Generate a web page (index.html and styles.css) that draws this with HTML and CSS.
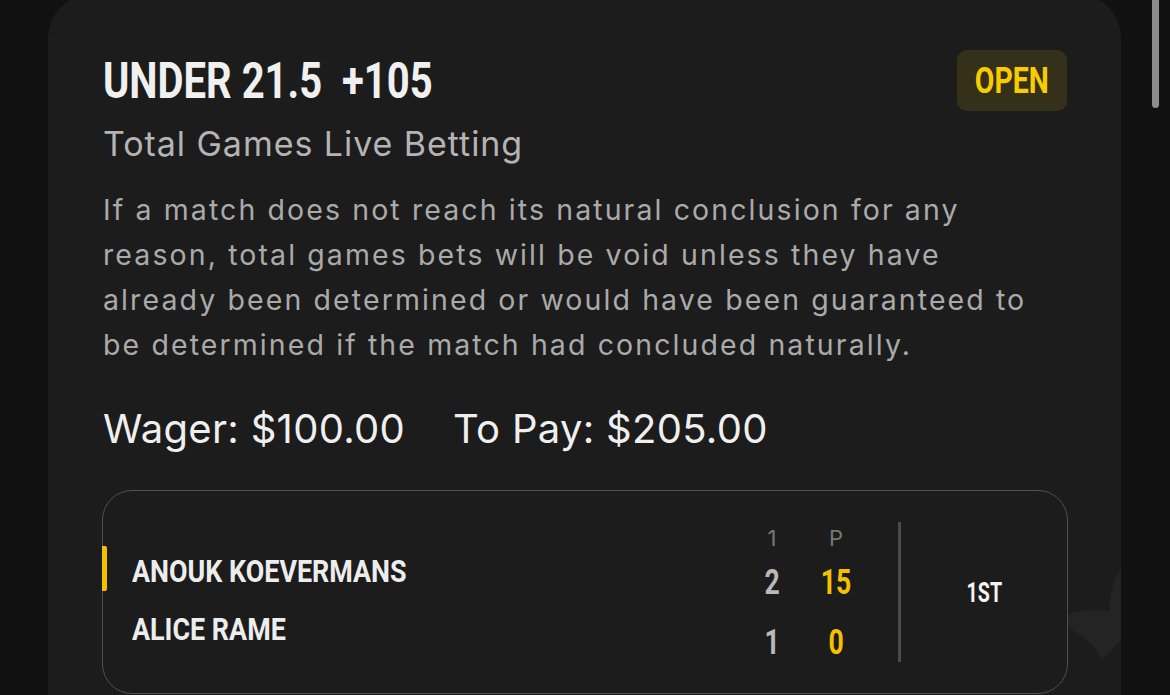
FILE: index.html
```html
<!DOCTYPE html>
<html lang="en">
<head>
  <meta charset="UTF-8" />
  <title>Bet Slip</title>
  <link rel="stylesheet" href="styles.css">
</head>
<body>

  <div class="scrollbar"></div>

  <div class="card">
    <svg class="watermark" width="70" height="150" viewBox="1058 554 70 150">
      <path d="M1121 568 C1113 580 1109 596 1110 611 C1096 609 1082 610 1068 614 L1068 628 C1082 634 1095 645 1102 660 L1121 640 Z" fill="#242424" />
    </svg>

    <div class="card-head">
      <h1 class="bet-title"><span class="narrow">UNDER 21.5&nbsp;&nbsp;+105</span></h1>
      <span class="status"><span class="narrow">OPEN</span></span>
    </div>

    <div class="market">Total Games Live Betting</div>

    <p class="rules">If a match does not reach its natural conclusion for any reason, total games bets will be void unless they have already been determined or would have been guaranteed to be determined if the match had concluded naturally.</p>

    <div class="amounts">
      <span>Wager: $100.00</span>
      <span>To Pay: $205.00</span>
    </div>

    <div class="scoreboard">
      <div class="players">
        <div class="player serving"><span class="narrow">ANOUK KOEVERMANS</span></div>
        <div class="player"><span class="narrow">ALICE RAME</span></div>
      </div>

      <div class="scores">
        <div class="score-col">
          <span class="col-head">1</span>
          <span class="set"><span class="narrow">2</span></span>
          <span class="set"><span class="narrow">1</span></span>
        </div>
        <div class="score-col">
          <span class="col-head">P</span>
          <span class="point"><span class="narrow">15</span></span>
          <span class="point"><span class="narrow">0</span></span>
        </div>
      </div>

      <div class="divider"></div>

      <div class="period"><span class="narrow">1ST</span></div>
    </div>
  </div>

</body>
</html>
```

FILE: styles.css
```css
body {
  margin: 0;
  background: #111111;
  font-family: Inter, "Noto Sans", sans-serif;
  overflow: hidden;
  height: 695px;
}

.scrollbar {
  position: absolute;
  top: -10px;
  left: 1152px;
  width: 7px;
  height: 118px;
  border-radius: 4px;
  background: #8d8d8d;
}

.card {
  position: relative;
  overflow: hidden;
  margin: -6px 0 0 48px;
  width: 1073px;
  height: 760px;
  box-sizing: border-box;
  padding: 58px 54px 0 55px;
  background: #1c1c1c;
  border-radius: 44px;
}

.watermark {
  position: absolute;
  left: 1010px;
  top: 560px;
}

/* condensed look: no narrow family installed, so squeeze Roboto */
.narrow {
  display: inline-block;
  transform-origin: left center;
  white-space: nowrap;
}

.card-head {
  display: flex;
  justify-content: space-between;
  align-items: flex-start;
}

.bet-title {
  margin: 0;
  font-family: Roboto, "Liberation Sans", sans-serif;
  font-weight: bold;
  font-size: 50px;
  line-height: 58px;
  color: #f0f0f0;
}

.bet-title .narrow { transform: scaleX(0.8); }

.status {
  display: flex;
  justify-content: center;
  align-items: center;
  margin-top: -2px;
  width: 110px;
  height: 61px;
  border-radius: 10px;
  background: #35301a;
  color: #f7cc00;
  font-family: Roboto, "Liberation Sans", sans-serif;
  font-weight: bold;
  font-size: 36px;
}

.status .narrow { transform: scaleX(0.79); transform-origin: center; }

.market {
  margin-top: 11px;
  font-size: 34px;
  line-height: 44px;
  letter-spacing: 0.95px;
  color: #b4b4b4;
}

.rules {
  margin: 21px 0 0;
  max-width: 950px;
  font-size: 28.5px;
  line-height: 45px;
  letter-spacing: 2.1px;
  color: #aaaaaa;
}

.amounts {
  display: flex;
  gap: 48px;
  margin-top: 37px;
  font-size: 40px;
  line-height: 50px;
  letter-spacing: 0.3px;
  color: #efefef;
}

.scoreboard {
  display: flex;
  align-items: flex-start;
  position: relative;
  margin: 36px -1px 0 -1px;
  height: 204px;
  box-sizing: border-box;
  border: 1.5px solid #505050;
  border-radius: 30px;
  background: #1c1c1c;
  font-family: Roboto, "Liberation Sans", sans-serif;
  font-weight: bold;
}

.players {
  flex: 1;
  min-width: 0;
  display: flex;
  flex-direction: column;
  gap: 14px;
  padding-top: 58px;
}

.player {
  position: relative;
  padding-left: 28.5px;
  font-size: 32px;
  line-height: 44px;
  color: #ededed;
}

.player .narrow { transform: scaleX(0.84); }

.player.serving::before {
  content: "";
  position: absolute;
  left: -1.5px;
  top: -3px;
  width: 5px;
  height: 45px;
  border-radius: 0 2px 2px 0;
  background: #f5c000;
}

.scores {
  display: flex;
  gap: 24px;
  margin-right: 42px;
  padding-top: 32px;
}

.score-col {
  display: flex;
  flex-direction: column;
  align-items: center;
  width: 40px;
}

.score-col .narrow { transform: scaleX(0.76); transform-origin: center; }

.col-head {
  font-family: Inter, "Noto Sans", sans-serif;
  font-weight: normal;
  font-size: 22px;
  line-height: 30px;
  color: #777777;
}

.set,
.point {
  font-size: 35px;
  line-height: 60px;
  color: #b9b9b9;
}

.point {
  color: #f5c000;
}

.divider {
  margin-top: 31px;
  width: 3px;
  height: 140px;
  background: #4b4b4b;
}

.period {
  width: 166px;
  padding-top: 82px;
  text-align: center;
  font-size: 28px;
  line-height: 40px;
  color: #f4f4f4;
}

.period .narrow { transform: scaleX(0.7); transform-origin: center; }
```
